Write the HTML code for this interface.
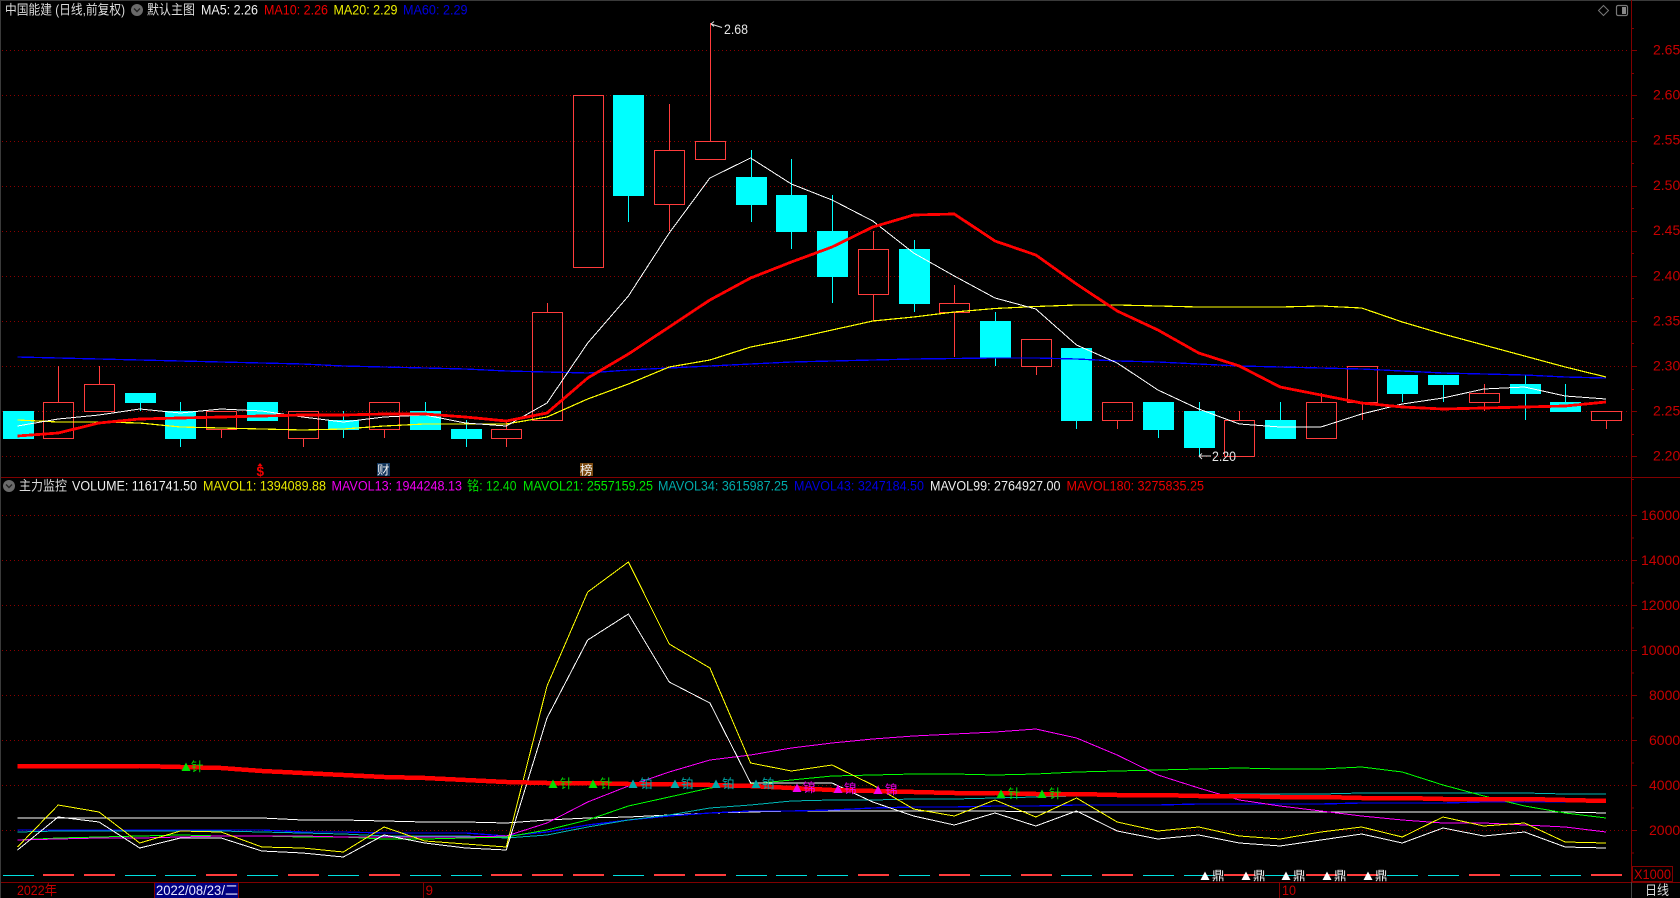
<!DOCTYPE html>
<html lang="zh">
<head>
<meta charset="utf-8">
<title>中国能建</title>
<style>
html,body{margin:0;padding:0;background:#000;width:1680px;height:898px;overflow:hidden}
svg{display:block;position:absolute;left:0;top:0}
text{font-family:"Liberation Sans","Noto Sans CJK SC",sans-serif;font-size:13.5px}
.ax{fill:#c80000;font-size:14px}
.cj{font-size:13px}
</style>
</head>
<body>
<svg id="c" width="1680" height="898" viewBox="0 0 1680 898" xmlns="http://www.w3.org/2000/svg">
<rect width="1680" height="898" fill="#000"/>
<g id="frame" shape-rendering="crispEdges">
<rect x="0" y="0" width="1680" height="1" fill="#3a3a3a"/>
<rect x="0" y="0" width="1" height="898" fill="#3a3a3a"/>
<rect x="1631" y="0" width="1" height="882" fill="#800000"/>
<rect x="1" y="477" width="1679" height="1" fill="#800000"/>
<rect x="1" y="882" width="1679" height="1" fill="#800000"/>
<rect x="1631" y="882" width="1" height="16" fill="#444"/>
</g>
<g id="grid" shape-rendering="crispEdges"></g>
<g id="plot"></g>

<!-- header, top panel -->
<text x="5" y="14.5" fill="#dcdcdc" textLength="120" lengthAdjust="spacingAndGlyphs">中国能建 (日线,前复权)</text>
<circle cx="137" cy="10" r="6" fill="#6a6a6a"/>
<path d="M134 8.5l3 3 3-3" fill="none" stroke="#222" stroke-width="1.4"/>
<text x="147" y="14.5" fill="#dcdcdc" textLength="48" lengthAdjust="spacingAndGlyphs">默认主图</text>
<text x="201" y="14.5" fill="#f0f0f0" textLength="57" lengthAdjust="spacingAndGlyphs">MA5: 2.26</text>
<text x="264" y="14.5" fill="#f00000" textLength="64" lengthAdjust="spacingAndGlyphs">MA10: 2.26</text>
<text x="333.5" y="14.5" fill="#f0f000" textLength="64" lengthAdjust="spacingAndGlyphs">MA20: 2.29</text>
<text x="403" y="14.5" fill="#0000e0" textLength="64.5" lengthAdjust="spacingAndGlyphs">MA60: 2.29</text>

<path d="M1603.5 5.5l5 5-5 5-5-5z" fill="none" stroke="#777" stroke-width="1"/>
<rect x="1616.5" y="5.5" width="11" height="10" rx="1.5" fill="none" stroke="#777" stroke-width="1.2"/>
<rect x="1622" y="7" width="4" height="7" fill="#888"/>

<!-- price axis -->
<text class="ax" x="1653" y="54.5">2.65</text>
<text class="ax" x="1653" y="99.5">2.60</text>
<text class="ax" x="1653" y="144.5">2.55</text>
<text class="ax" x="1653" y="190">2.50</text>
<text class="ax" x="1653" y="235">2.45</text>
<text class="ax" x="1653" y="280.5">2.40</text>
<text class="ax" x="1653" y="325.5">2.35</text>
<text class="ax" x="1653" y="370.5">2.30</text>
<text class="ax" x="1653" y="415.5">2.25</text>
<text class="ax" x="1653" y="460.5">2.20</text>

<!-- high / low -->
<path d="M711 24l11 3.500M711 24l3-2.500M711 24l3 2.500" fill="none" stroke="#ddd" stroke-width="1"/>
<text x="724" y="34" fill="#e6e6e6" font-size="13.5" textLength="24" lengthAdjust="spacingAndGlyphs">2.68</text>
<path d="M1199 456h12M1199 456l3-2.500M1199 456l3 3" fill="none" stroke="#ddd" stroke-width="1"/>
<text x="1212" y="461" fill="#e6e6e6" textLength="24" lengthAdjust="spacingAndGlyphs">2.20</text>

<!-- signal flags -->
<path d="M260 463l2.500 3h-5z" fill="#f00000"/>
<text x="256.500" y="476" fill="#f00000" font-size="12.500" font-weight="bold">$</text>
<rect x="377" y="463" width="13" height="13" fill="#12365c"/>
<text x="377" y="474.500" fill="#f0f0f0" style="font-size:12.500px">财</text>
<rect x="580" y="463" width="13" height="13" fill="#7c4a10"/>
<text x="580" y="474.500" fill="#f0f0f0" style="font-size:12.500px">榜</text>

<!-- header, volume panel -->
<circle cx="9" cy="486" r="6" fill="#6a6a6a"/>
<path d="M6 484.500l3 3 3-3" fill="none" stroke="#222" stroke-width="1.400"/>
<text x="19" y="490.500" fill="#dcdcdc" textLength="48" lengthAdjust="spacingAndGlyphs">主力监控</text>
<text x="72" y="490.500" fill="#f0f0f0" textLength="125" lengthAdjust="spacingAndGlyphs">VOLUME: 1161741.50</text>
<text x="203" y="490.500" fill="#e8e800" textLength="123" lengthAdjust="spacingAndGlyphs">MAVOL1: 1394089.88</text>
<text x="331.500" y="490.500" fill="#f000f0" textLength="130.500" lengthAdjust="spacingAndGlyphs">MAVOL13: 1944248.13</text>
<text x="467" y="490.500" fill="#00e000" textLength="49.500" lengthAdjust="spacingAndGlyphs">铭: 12.40</text>
<text x="523" y="490.500" fill="#00e800" textLength="130" lengthAdjust="spacingAndGlyphs">MAVOL21: 2557159.25</text>
<text x="658" y="490.500" fill="#00aaaa" textLength="130" lengthAdjust="spacingAndGlyphs">MAVOL34: 3615987.25</text>
<text x="794" y="490.500" fill="#0000e0" textLength="130" lengthAdjust="spacingAndGlyphs">MAVOL43: 3247184.50</text>
<text x="930" y="490.500" fill="#f0f0f0" textLength="130.500" lengthAdjust="spacingAndGlyphs">MAVOL99: 2764927.00</text>
<text x="1066.500" y="490.500" fill="#e80000" textLength="137.500" lengthAdjust="spacingAndGlyphs">MAVOL180: 3275835.25</text>

<!-- volume axis -->
<text class="ax" x="1641" y="520">16000</text>
<text class="ax" x="1641" y="565">14000</text>
<text class="ax" x="1641" y="610">12000</text>
<text class="ax" x="1641" y="655">10000</text>
<text class="ax" x="1649" y="700">8000</text>
<text class="ax" x="1649" y="745">6000</text>
<text class="ax" x="1649" y="790">4000</text>
<text class="ax" x="1649" y="835">2000</text>
<rect x="1632.500" y="866.500" width="40" height="15" fill="#000" stroke="#800000" shape-rendering="crispEdges"/>
<text class="ax" x="1634" y="879" textLength="37" lengthAdjust="spacingAndGlyphs">X1000</text>

<!-- date axis -->
<text x="17" y="895" fill="#c80000" style="font-size:13.500px" textLength="40" lengthAdjust="spacingAndGlyphs">2022年</text>
<rect x="155" y="883" width="83" height="15" fill="#000080" shape-rendering="crispEdges"/>
<rect x="154" y="883" width="1" height="15" fill="#800000" shape-rendering="crispEdges"/>
<rect x="238" y="883" width="1" height="15" fill="#800000" shape-rendering="crispEdges"/>
<text x="156" y="895" fill="#e6e6ff" textLength="82" lengthAdjust="spacingAndGlyphs">2022/08/23/二</text>
<rect x="423" y="883" width="1" height="15" fill="#800000" shape-rendering="crispEdges"/>
<text x="425.500" y="895" fill="#c80000">9</text>
<rect x="1279" y="883" width="1" height="15" fill="#800000" shape-rendering="crispEdges"/>
<text x="1282" y="895" fill="#c80000" textLength="14" lengthAdjust="spacingAndGlyphs">10</text>
<text x="1645" y="895" fill="#dcdcdc" textLength="24" lengthAdjust="spacingAndGlyphs">日线</text>

<!-- markers: text glyphs next to triangles -->
<g id="tri"></g>
<g class="cj" style="font-size:12.500px">
<text x="191" y="771" fill="#00e000" style="font-size:12.500px">针</text>
<text x="560" y="788" fill="#00e000" style="font-size:12.500px">针</text>
<text x="600" y="788" fill="#00e000" style="font-size:12.500px">针</text>
<text x="640" y="788" fill="#00aaaa" style="font-size:12.500px">铂</text>
<text x="681" y="788" fill="#00aaaa" style="font-size:12.500px">铂</text>
<text x="722" y="788" fill="#00aaaa" style="font-size:12.500px">铂</text>
<text x="762" y="788" fill="#00aaaa" style="font-size:12.500px">铂</text>
<text x="803" y="792" fill="#f000f0" style="font-size:12.500px">锦</text>
<text x="844" y="793" fill="#f000f0" style="font-size:12.500px">锦</text>
<text x="885" y="794" fill="#f000f0" style="font-size:12.500px">锦</text>
<text x="1008" y="798" fill="#00e000" style="font-size:12.500px">针</text>
<text x="1049" y="798" fill="#00e000" style="font-size:12.500px">针</text>
<text x="1212" y="880" fill="#f0f0f0" style="font-size:12.500px">鼎</text>
<text x="1253" y="880" fill="#f0f0f0" style="font-size:12.500px">鼎</text>
<text x="1293" y="880" fill="#f0f0f0" style="font-size:12.500px">鼎</text>
<text x="1334" y="880" fill="#f0f0f0" style="font-size:12.500px">鼎</text>
<text x="1375" y="880" fill="#f0f0f0" style="font-size:12.500px">鼎</text>
</g>
</svg>
<script>
(function(){
var NS="http://www.w3.org/2000/svg";
function el(p,n,a){var e=document.createElementNS(NS,n);for(var k in a)e.setAttribute(k,a[k]);p.appendChild(e);return e}
var grid=document.getElementById('grid'),plot=document.getElementById('plot'),tri=document.getElementById('tri');
function X(i){return 17.5+40.73*i}
function Y(p){return 50.3+(2.65-p)*902.2}

/* grid + ticks */
var top=[],k;
for(k=0;k<10;k++)top.push(Y(2.65-k*0.05));
var vol=[515,560,605,650,695,740,785,830];
top.concat(vol).forEach(function(y){
  y=Math.round(y)+0.5;
  el(grid,'line',{x1:2,x2:1627,y1:y,y2:y,stroke:'#8a0000','stroke-width':1,'stroke-dasharray':'1 3'});
  el(grid,'line',{x1:1632,x2:1637,y1:y,y2:y,stroke:'#800000','stroke-width':1});
});
for(k=0;k<10;k++){var y=Math.round(Y(2.65-k*0.05)+22.5)+0.5;el(grid,'line',{x1:1632,x2:1634,y1:y,y2:y,stroke:'#800000'});}
y=Math.round(Y(2.65)-22.5)+0.5;el(grid,'line',{x1:1632,x2:1634,y1:y,y2:y,stroke:'#800000'});
vol.forEach(function(v){var y=v+22.5+0.5;if(y<860)el(grid,'line',{x1:1632,x2:1634,y1:y,y2:y,stroke:'#800000'});});

/* candles: colour, top, bottom, high, low */
var R='r',C='c';
var d=[[C,2.25,2.22],[R,2.26,2.22,2.30,0],[R,2.28,2.25,2.30,0],[C,2.27,2.26,0,2.25],[C,2.25,2.22,2.26,2.21],
[R,2.25,2.23,0,2.22],[C,2.26,2.24],[R,2.25,2.22,0,2.21],[C,2.24,2.23,2.25,2.22],[R,2.26,2.23,0,2.22],
[C,2.25,2.23,2.26,0],[C,2.23,2.22,2.24,2.21],[R,2.23,2.22,2.24,2.21],[R,2.36,2.24,2.37,0],[R,2.60,2.41],
[C,2.60,2.49,0,2.46],[R,2.54,2.48,2.59,2.45],[R,2.55,2.53,2.68,0],[C,2.51,2.48,2.54,2.46],[C,2.49,2.45,2.53,2.43],
[C,2.45,2.40,2.49,2.37],[R,2.43,2.38,2.45,2.35],[C,2.43,2.37,2.44,2.36],[R,2.37,2.36,2.39,2.31],[C,2.35,2.31,2.36,2.30],
[R,2.33,2.30,0,2.29],[C,2.32,2.24,0,2.23],[R,2.26,2.24,0,2.23],[C,2.26,2.23,0,2.22],[C,2.25,2.21,2.26,2.20],
[R,2.24,2.20,2.25,0],[C,2.24,2.22,2.26,0],[R,2.26,2.22,2.27,0],[R,2.30,2.26,0,2.24],[C,2.29,2.27,0,2.26],
[C,2.29,2.28,0,2.26],[R,2.27,2.26,2.28,2.25],[C,2.28,2.27,2.29,2.24],[C,2.26,2.25,2.28,0],[R,2.25,2.24,0,2.23]];
var RED='#ff3c3c',CY='#00ffff';
var cg=el(plot,'g',{'shape-rendering':'crispEdges'});
d.forEach(function(c,i){
  var x=Math.round(X(i)),col=c[0]==R?RED:CY,t=Math.round(Y(c[1])),b=Math.round(Y(c[2]));
  if(c[3])el(cg,'line',{x1:x+.5,x2:x+.5,y1:Math.round(Y(c[3])),y2:t,stroke:col});
  if(c[4])el(cg,'line',{x1:x+.5,x2:x+.5,y1:b,y2:Math.round(Y(c[4])),stroke:col});
  if(c[0]==R)el(cg,'rect',{x:x-14.5,y:t+.5,width:30,height:b-t,fill:'none',stroke:RED});
  else el(cg,'rect',{x:x-15,y:t,width:31,height:b-t+1,fill:CY});
  /* bottom dashes */
  if(c[0]==R)el(cg,'rect',{x:x-15,y:874,width:31,height:2,fill:RED});
  else el(cg,'rect',{x:x-15,y:875,width:31,height:1,fill:'#00e0e0'});
});

function line(a,col,w){
  var pts=a.map(function(v,i){return X(i).toFixed(1)+','+v}).join(' ');
  el(plot,'polyline',{points:pts,fill:'none',stroke:col,'stroke-width':w,'stroke-linejoin':'round','shape-rendering':'crispEdges'});
}
/* price MAs */
var ma60=[357,358,359,360,361,362,363,364,366,367,368,369,371,372,373,370,368,366,364,362,361,360,359,358.5,358,358,359,361,362,364,366,367,368,369,371,373,374,375,377,378];
line(ma60,'#0000ff',1.3);
var ma20=[420,422,422,423,427,428,429,430,429,426,424,424,424,417,399,384,367,360,347,339,330,321,317,312,308.5,306.5,305,305,306,307,307,307,306,308,322,334,345,356,367,377];
line(ma20,'#ffff00',1.2);
var ma5=[426,419,415,409,413,409,411,417,422,417,415,423,426,403,343,296,233,178,158,184,200,221,253,276,298,309,345,363,390,409,424,427,427,414,404,398,389,387,396,399];
line(ma5,'#ffffff',1);
var ma10=[436,433,423,419,418,417,416,415,415,414,414,417,421,413,378,354,327,300,278,262,247,227,215,214,241,255,284,311,330,353,366,387,395,403,407,409,408,407,406,402];
line(ma10,'#ff0000',2.8);

/* volume lines */
var m99=[818,818,818,818,818,818,818,820,820,821,822,822,823,820,818,817,815,813,812,811,811,811,811,811,811,812,812,812,812,812,812,812,812,812,812,812,812,812,812,813];
var m43=[830,830,830,830,830,830,830,832,832,833,833,833,836,832,825,820,816,813,811,811,810,808,807,807,806,806,805,805,805,804,804,804,804,803,803,803,802,802,802,802];
var m34=[832,831,831,831,831,831,832,833,834,836,836,836,838,835,827,820,815,808,805,801,800,800,799,799,798,797,796,795,795,795,794,794,794,793,793,793,793,793,794,794];
var m21=[840,838,837,836,835,836,836,837,837,839,839,838,837,830,820,806,797,788,784,780,776,775,774,774,775,774,772,771,770,769,768,769,769,767,772,785,796,806,813,818];
var m13=[840,839,838,838,837,836,836,836,837,837,837,837,836,823,802,786,772,760,755,748,743,739,736,734,732,729,738,755,775,788,800,806,811,816,820,823,823,825,827,832];
var yl=[847,805,812,843,831,832,847,848,852,827,841,844,847,686,592,562,644,668,763,771,765,785,809,816,800,817,798,822,831,827,836,839,832,827,837,817,826,823,842,843];
var wh=[850,817,822,848,838,838,851,853,857,835,843,848,850,718,640,614,682,703,783,783,783,802,816,825,813,826,811,831,839,835,843,846,840,834,843,828,836,832,847,848];
line(m99,'#ffffff',1);
line(m43,'#0000ff',1.3);
line(m34,'#00b4b4',1);
line(m21,'#00ff00',1);
line(m13,'#ff00ff',1);
line(yl,'#ffff00',1);
line(wh,'#ffffff',1);
var m180=[766,766,766,766,767,768,771,773,775,777,778,780,782,783,783,784,784,785,786,788,790,791,792,793,793,794,794,795,795,796,796,797,797,798,798,799,799,799,800,801];
line(m180,'#ff0000',4.5);

/* marker triangles */
function T(x,y,col){el(tri,'path',{d:'M'+x+' '+(y-4.5)+'l4.5 8.5h-9z',fill:col})}
T(186,767,'#00e000');
[[553,784,'#00e000'],[593,784,'#00e000'],[633,784,'#00aaaa'],[675,784,'#00aaaa'],[716,784,'#00aaaa'],[756,784,'#00aaaa'],
 [797,788,'#f000f0'],[838,789,'#f000f0'],[878,790,'#f000f0'],[1001,794,'#00e000'],[1042,794,'#00e000'],
 [1205,876,'#ffffff'],[1246,876,'#ffffff'],[1286,876,'#ffffff'],[1327,876,'#ffffff'],[1368,876,'#ffffff']
].forEach(function(t){T(t[0],t[1],t[2])});
})();
</script>
</body>
</html>
